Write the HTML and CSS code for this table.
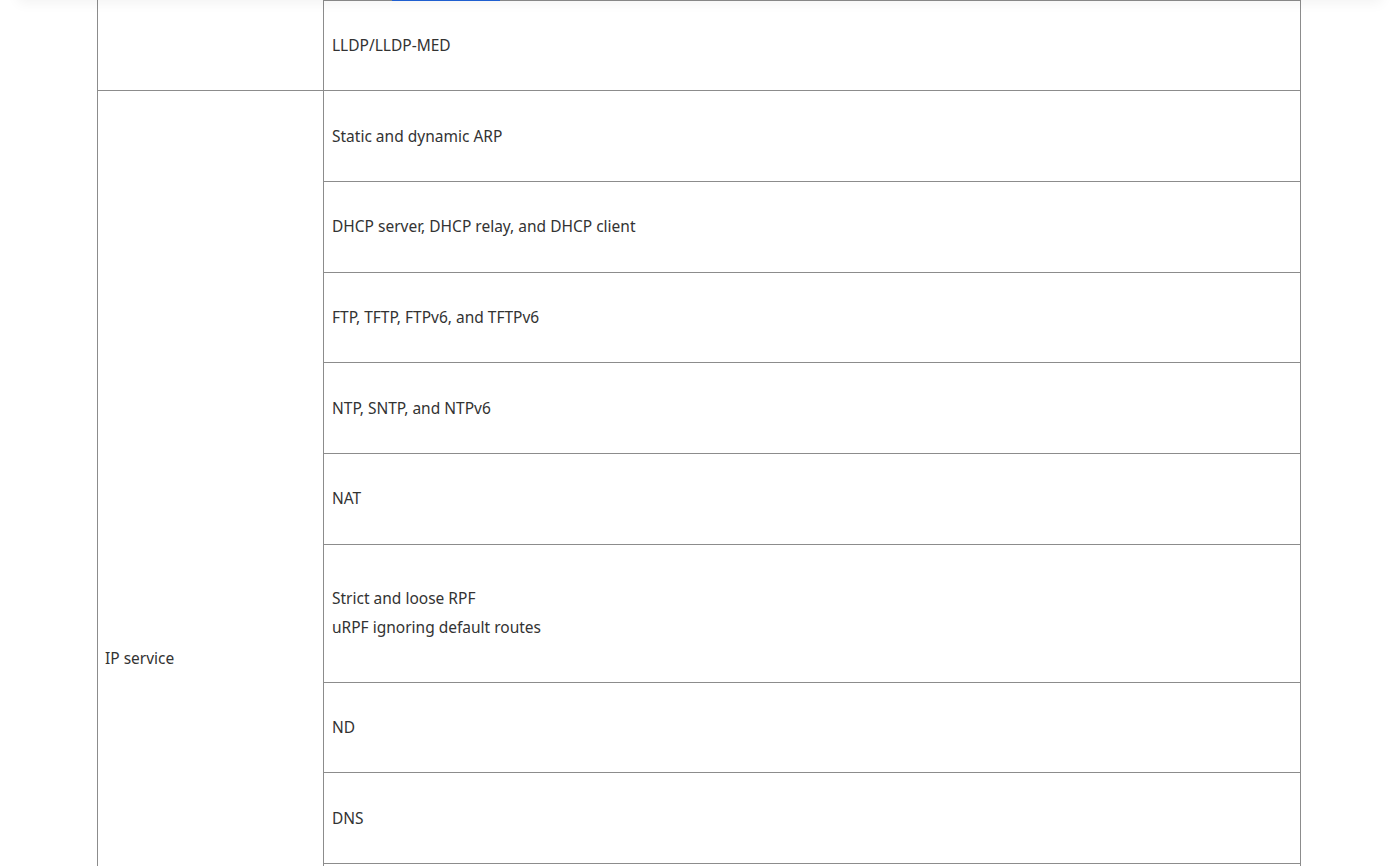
FILE: index.html
```html
<!DOCTYPE html>
<html lang="en">
<head>
<meta charset="utf-8">
<title>Feature list</title>
<link rel="stylesheet" href="styles.css">
</head>
<body>
<div class="topbar">
  <span class="topbar-indicator"></span>
</div>
<main class="content">
  <table class="spec-table">
    <tbody>
      <tr>
        <td class="cat" rowspan="4">Layer 2 features</td>
        <td class="feat"><p>VLAN</p></td>
      </tr>
      <tr><td class="feat"><p>STP, RSTP, and MSTP</p></td></tr>
      <tr><td class="feat"><p>LACP link aggregation</p></td></tr>
      <tr>
        <td class="feat"><p>LLDP/LLDP-MED</p></td>
      </tr>
      <tr>
        <td class="cat" rowspan="12">IP service</td>
        <td class="feat"><p>Static and dynamic ARP</p></td>
      </tr>
      <tr><td class="feat"><p>DHCP server, DHCP relay, and DHCP client</p></td></tr>
      <tr><td class="feat"><p>FTP, TFTP, FTPv6, and TFTPv6</p></td></tr>
      <tr><td class="feat"><p>NTP, SNTP, and NTPv6</p></td></tr>
      <tr><td class="feat"><p>NAT</p></td></tr>
      <tr><td class="feat feat-multi"><p>Strict and loose RPF</p><p>uRPF ignoring default routes</p></td></tr>
      <tr><td class="feat"><p>ND</p></td></tr>
      <tr><td class="feat"><p>DNS</p></td></tr>
      <tr><td class="feat"><p>IPv4/IPv6 dual stack</p></td></tr>
      <tr><td class="feat"><p>DHCPv6 relay</p></td></tr>
      <tr><td class="feat"><p>IP source guard</p></td></tr>
      <tr><td class="feat"><p>Telnet and SSH</p></td></tr>
    </tbody>
  </table>
</main>
</body>
</html>
```
FILE: styles.css
```css
html, body {
  margin: 0;
  padding: 0;
  background: #ffffff;
}

body {
  font-family: "Noto Sans", "Open Sans", sans-serif;
  font-size: 15.5px;
  color: #333333;
}

.topbar {
  position: fixed;
  top: -60px;
  left: 18px;
  right: 18px;
  height: 60px;
  background: #ffffff;
  box-shadow: 0 3px 12px rgba(0, 0, 0, 0.05);
  z-index: 5;
}

.topbar-indicator {
  position: absolute;
  left: 374px;
  bottom: -1px;
  width: 108px;
  height: 1px;
  background: #1f5fd0;
}

.content {
  padding: 0 99px 40px 97px;
  margin-top: -272.2px;
}

.spec-table {
  width: 1204px;
  border-collapse: collapse;
  table-layout: fixed;
}

.spec-table td {
  border: 1px solid #8c8c8c;
  vertical-align: middle;
  line-height: 29px;
  padding: 30.33px 8px;
}

.spec-table .cat {
  width: 210px;
  padding-left: 7px;
}

.spec-table p {
  margin: 0;
}

.spec-table .feat {
  padding-left: 8px;
}

.spec-table .feat-multi {
  padding-top: 39.5px;
  padding-bottom: 39.5px;
}
```
